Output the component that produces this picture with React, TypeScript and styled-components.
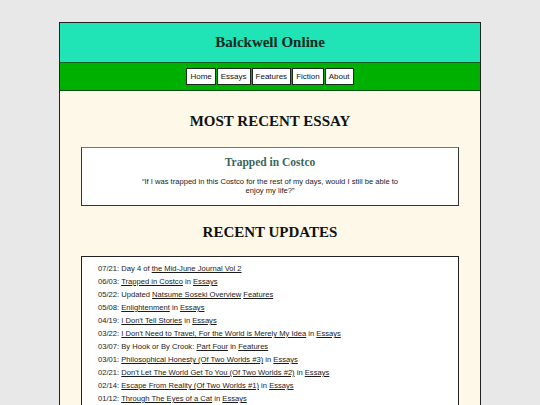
import React from 'react';
import styled, { createGlobalStyle } from 'styled-components';

const GlobalStyle = createGlobalStyle`
  html, body {
    margin: 0;
    padding: 0;
    background: #e8e8e8;
  }
  body {
    font-family: 'Liberation Sans', Arial, sans-serif;
  }
`;

const Page = styled.div`
  width: 422px;
  margin: 22px auto 0;
  border: 1px solid #222;
  border-bottom: none;
  box-sizing: border-box;
`;

const Header = styled.header`
  background: #20e3b6;
  height: 39px;
  display: flex;
  align-items: center;
  justify-content: center;
  border-bottom: 1px solid #0b5e1c;
`;

const SiteTitle = styled.h1`
  margin: 0;
  font-family: 'Liberation Serif', 'Times New Roman', serif;
  font-size: 15px;
  font-weight: bold;
  color: #0e2a22;
`;

const NavBar = styled.nav`
  background: #00b000;
  height: 27px;
  display: flex;
  align-items: center;
  justify-content: center;
  border-bottom: 1px solid #0b4f12;
`;

const NavGroup = styled.div`
  display: flex;
  gap: 1px;
`;

const NavButton = styled.a`
  display: flex;
  align-items: center;
  height: 17px;
  box-sizing: border-box;
  padding: 0 3px;
  background: #fff;
  border: 1px solid #1c2a1c;
  font-size: 8px;
  color: #111;
  text-decoration: none;
`;

const Content = styled.main`
  background: #fdf8e7;
  padding: 18px 21px 20px;
  display: flex;
  flex-direction: column;
  align-items: stretch;
`;

const SectionTitle = styled.h2`
  margin: 0;
  text-align: center;
  font-family: 'Liberation Serif', 'Times New Roman', serif;
  font-size: 15px;
  font-weight: bold;
  color: #111;
  line-height: 24px;
`;

const FeatureBox = styled.section`
  margin: 14px 0 14px;
  background: #fff;
  border: 1px solid #333;
  border-top-color: #777;
  padding: 8px 55px 10px;
  text-align: center;
`;

const FeatureTitle = styled.h3`
  margin: 0 0 9px;
  font-family: 'Liberation Serif', 'Times New Roman', serif;
  font-size: 11.5px;
  font-weight: bold;
  color: #3b6661;
`;

const Quote = styled.p`
  margin: 0;
  font-size: 7.6px;
  line-height: 9px;
  color: #1a1a1a;
`;

const UpdateBox = styled.ul`
  list-style: none;
  margin: 12px 0 0;
  padding: 5px 16px 4px;
  background: #fff;
  border: 1px solid #222;
`;

const UpdateItem = styled.li`
  font-size: 7.6px;
  line-height: 13px;
  color: #1a1a1a;
`;

const Link = styled.a`
  color: #1a1a1a;
  text-decoration: underline;
`;

type Part = string | { link: string };

const updates: { date: string; parts: Part[] }[] = [
  { date: '07/21', parts: ['Day 4 of ', { link: 'the Mid-June Journal Vol 2' }] },
  { date: '06/03', parts: [{ link: 'Trapped in Costco' }, ' in ', { link: 'Essays' }] },
  { date: '05/22', parts: ['Updated ', { link: 'Natsume Soseki Overview' }, ' ', { link: 'Features' }] },
  { date: '05/08', parts: [{ link: 'Enlightenment' }, ' in ', { link: 'Essays' }] },
  { date: '04/19', parts: [{ link: "I Don't Tell Stories" }, ' in ', { link: 'Essays' }] },
  { date: '03/22', parts: [{ link: "I Don't Need to Travel, For the World is Merely My Idea" }, ' in ', { link: 'Essays' }] },
  { date: '03/07', parts: ['By Hook or By Crook: ', { link: 'Part Four' }, ' in ', { link: 'Features' }] },
  { date: '03/01', parts: [{ link: 'Philosophical Honesty (Of Two Worlds #3)' }, ' in ', { link: 'Essays' }] },
  { date: '02/21', parts: [{ link: "Don't Let The World Get To You (Of Two Worlds #2)" }, ' in ', { link: 'Essays' }] },
  { date: '02/14', parts: [{ link: 'Escape From Reality (Of Two Worlds #1)' }, ' in ', { link: 'Essays' }] },
  { date: '01/12', parts: [{ link: 'Through The Eyes of a Cat' }, ' in ', { link: 'Essays' }] },
];

const navItems = ['Home', 'Essays', 'Features', 'Fiction', 'About'];

const App: React.FC = () => (
  <>
    <GlobalStyle />
    <Page>
      <Header>
        <SiteTitle>Balckwell Online</SiteTitle>
      </Header>
      <NavBar>
        <NavGroup>
          {navItems.map((item) => (
            <NavButton key={item} href="#">{item}</NavButton>
          ))}
        </NavGroup>
      </NavBar>
      <Content>
        <SectionTitle>MOST RECENT ESSAY</SectionTitle>
        <FeatureBox>
          <FeatureTitle>Trapped in Costco</FeatureTitle>
          <Quote>
            “If I was trapped in this Costco for the rest of my days, would I still be able to enjoy my life?”
          </Quote>
        </FeatureBox>
        <SectionTitle>RECENT UPDATES</SectionTitle>
        <UpdateBox>
          {updates.map((u) => (
            <UpdateItem key={u.date}>
              {u.date}:{' '}
              {u.parts.map((p, i) =>
                typeof p === 'string' ? <span key={i}>{p}</span> : <Link key={i} href="#">{p.link}</Link>
              )}
            </UpdateItem>
          ))}
        </UpdateBox>
      </Content>
    </Page>
  </>
);

export default App;
